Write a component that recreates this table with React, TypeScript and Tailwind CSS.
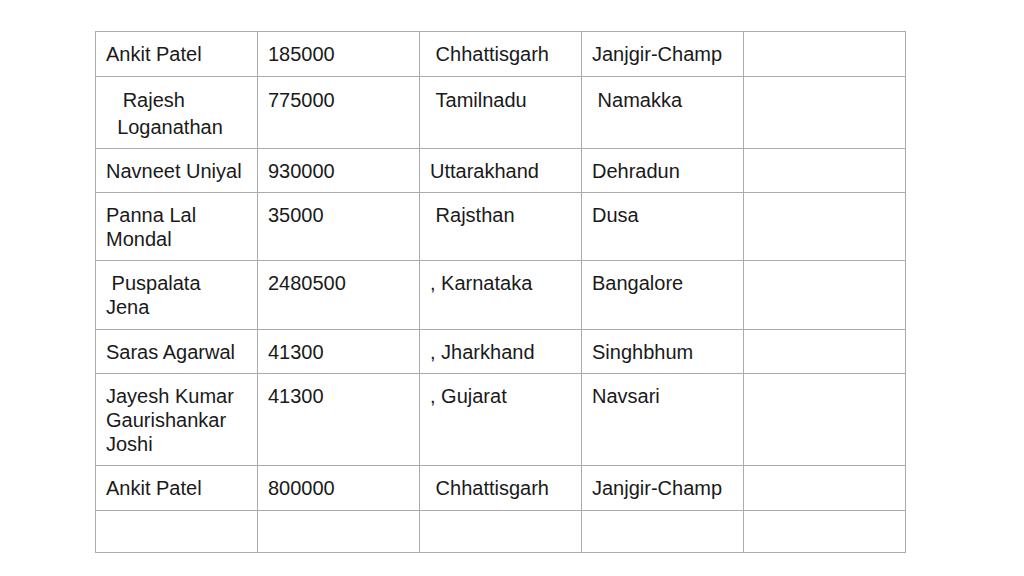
const rows: { h: string; lh?: string; cells: string[] }[] = [
  { h: 'h-[45px]', cells: ['Ankit Patel', '185000', ' Chhattisgarh', 'Janjgir-Champ', ''] },
  { h: 'h-[72px]', lh: 'leading-[27px]', cells: ['   Rajesh\n  Loganathan', '775000', ' Tamilnadu', ' Namakka', ''] },
  { h: 'h-[44px]', cells: ['Navneet Uniyal', '930000', 'Uttarakhand', 'Dehradun', ''] },
  { h: 'h-[68px]', cells: ['Panna Lal\nMondal', '35000', ' Rajsthan', 'Dusa', ''] },
  { h: 'h-[69px]', cells: [' Puspalata\nJena', '2480500', ', Karnataka', 'Bangalore', ''] },
  { h: 'h-[44px]', cells: ['Saras Agarwal', '41300', ', Jharkhand', 'Singhbhum', ''] },
  { h: 'h-[92px]', cells: ['Jayesh Kumar\nGaurishankar\nJoshi', '41300', ', Gujarat', 'Navsari', ''] },
  { h: 'h-[45px]', cells: ['Ankit Patel', '800000', ' Chhattisgarh', 'Janjgir-Champ', ''] },
  { h: 'h-[42px]', cells: ['', '', '', '', ''] },
]

export default function App() {
  return (
    <div className="w-[1024px] h-[576px] bg-white pl-[95px] pt-[31px] font-['Liberation_Sans',Arial,sans-serif] text-[20px] text-[#1a1a1a]">
      <table className="w-[811px] table-fixed border-collapse">
        <tbody>
          {rows.map((r, i) => (
            <tr key={i} className={r.h}>
              {r.cells.map((c, j) => (
                <td
                  key={j}
                  className={`border border-[#ababab] align-top px-[10px] pt-[10px] pb-0 whitespace-pre-wrap ${r.lh ?? 'leading-[24px]'}`}
                >
                  {c}
                </td>
              ))}
            </tr>
          ))}
        </tbody>
      </table>
    </div>
  )
}
